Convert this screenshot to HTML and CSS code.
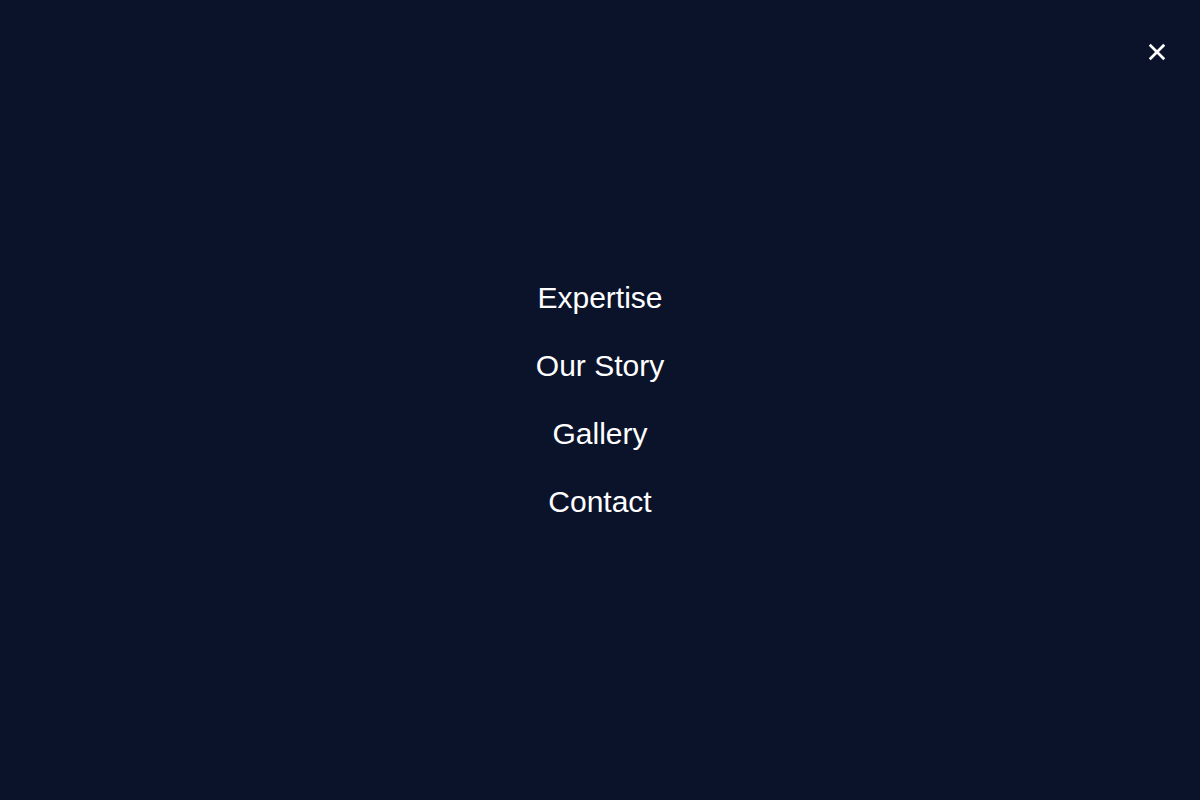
FILE: index.html
```html
<!DOCTYPE html>
<html lang="en">
<head>
<meta charset="utf-8">
<title>Menu</title>
<link rel="stylesheet" href="styles.css">
</head>
<body>
<div class="overlay">
  <button class="close" aria-label="Close menu">
    <svg viewBox="0 0 20 20" width="20" height="20"><path d="M3 3 L17 17 M17 3 L3 17" stroke="#ffffff" stroke-width="3" stroke-linecap="square" fill="none"/></svg>
  </button>
  <nav class="menu">
    <a href="#" class="menu-link">Expertise</a>
    <a href="#" class="menu-link">Our Story</a>
    <a href="#" class="menu-link">Gallery</a>
    <a href="#" class="menu-link">Contact</a>
  </nav>
</div>
</body>
</html>
```

FILE: styles.css
```css
html, body {
  margin: 0;
  padding: 0;
  height: 100%;
}
body {
  background: #0b132b;
  font-family: "Liberation Sans", Arial, sans-serif;
}
.overlay {
  position: relative;
  height: 100vh;
  display: flex;
  align-items: center;
  justify-content: center;
}
.close {
  position: absolute;
  top: 32px;
  right: 23px;
  width: 40px;
  height: 40px;
  padding: 0;
  border: 0;
  background: transparent;
  display: flex;
  align-items: center;
  justify-content: center;
  cursor: pointer;
}
.close svg {
  width: 18px;
  height: 18px;
}
.menu {
  display: flex;
  flex-direction: column;
  align-items: center;
  gap: 32px;
}
.menu-link {
  color: #ffffff;
  text-decoration: none;
  font-size: 30px;
  line-height: 36px;
}
```
